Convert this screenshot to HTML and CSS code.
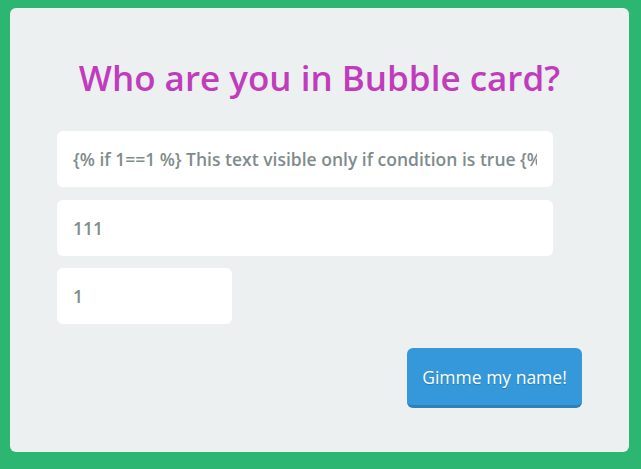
FILE: index.html
```html
<!DOCTYPE html>
<html>
<head>
<meta charset="utf-8">
<link rel="stylesheet" href="styles.css">
</head>
<body>
<div class="card">
  <h1 class="title">Who are you in Bubble card?</h1>
  <div class="fields">
    <div class="field field-wide"><span class="field-text">{% if 1==1 %} This text visible only if condition is true {% endif %}</span></div>
    <div class="field field-wide"><span class="field-text">111</span></div>
    <div class="field field-small"><span class="field-text">1</span></div>
  </div>
  <div class="actions">
    <button class="btn">Gimme my name!</button>
  </div>
</div>
</body>
</html>
```
FILE: styles.css
```css
html, body {
  margin: 0;
  padding: 0;
}
body {
  background: #2db572;
  height: 469px;
  padding: 8px 12px 0 10px;
  box-sizing: border-box;
  font-family: "Open Sans", "Noto Sans", sans-serif;
}
.card {
  background: #ecf0f1;
  border-radius: 6px;
  height: 444px;
  box-sizing: border-box;
  padding: 44px 47px 0 47px;
}
.title {
  margin: 0 0 27px 0;
  text-align: center;
  color: #c13cbc;
  font-size: 35px;
  font-weight: 600;
  line-height: 52px;
}
.fields {
  display: flex;
  flex-direction: column;
  gap: 12.5px;
}
.field {
  background: #fff;
  border-radius: 6px;
  height: 56px;
  box-sizing: border-box;
  padding: 0 16px;
  display: flex;
  align-items: center;
  color: #7f8c8d;
  font-size: 17.5px;
  font-weight: 600;
}
.field-text {
  display: block;
  width: 100%;
  white-space: nowrap;
  overflow: hidden;
}
.field-wide {
  width: 496px;
}
.field-small {
  width: 175px;
}
.actions {
  display: flex;
  justify-content: flex-end;
  margin-top: 24px;
}
.btn {
  width: 175px;
  height: 60px;
  background: #3498db;
  border: none;
  border-bottom: 3px solid #2f80b6;
  border-radius: 6px;
  color: #fff;
  font-family: "Open Sans", "Noto Sans", sans-serif;
  font-size: 17.5px;
  text-shadow: 0 1px 1px rgba(0,0,0,0.2);
  padding: 0;
}
```
